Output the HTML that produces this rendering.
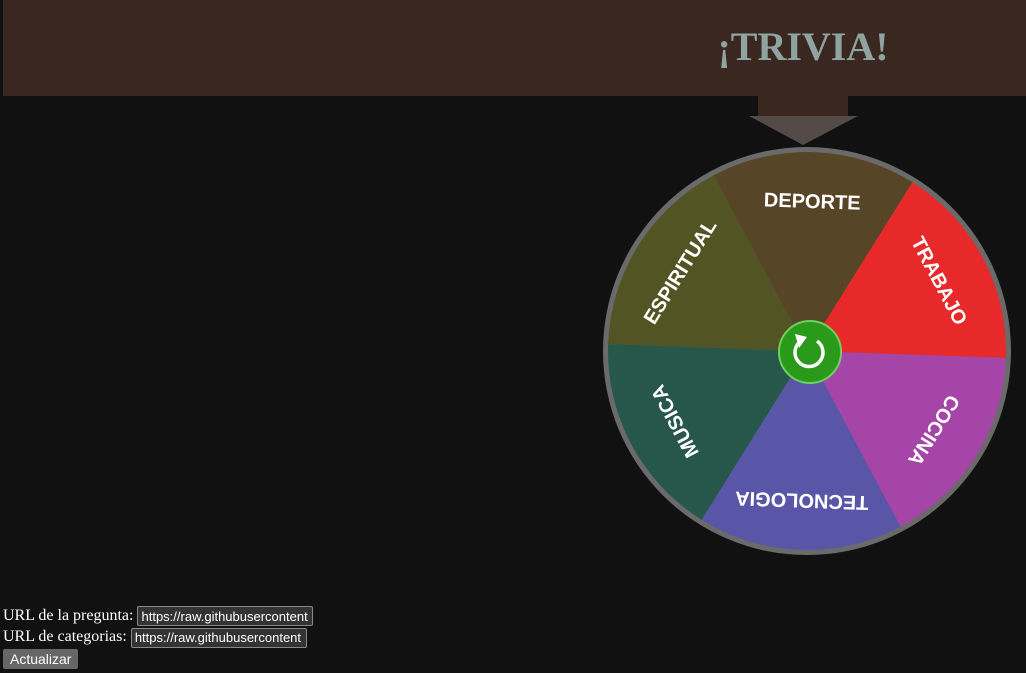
<!DOCTYPE html>
<html><head><style>
html,body{margin:0;padding:0;background:#111;width:1026px;height:673px;overflow:hidden}
.hdr{position:absolute;left:3px;top:0;width:1023px;height:96px;background:#3a271f}
.title{position:absolute;left:703px;top:23px;width:200px;text-align:center;font:bold 40px "Liberation Serif",serif;color:#8fa3a0}
.form{position:absolute;left:3px;top:605px;color:#fff;font:16px "Liberation Serif",serif;line-height:21px}
.form input{background:#333;color:#fff;border:1px solid #888;border-radius:2px;font:13px "Liberation Sans",sans-serif;padding:1px 3px;height:16px;width:168px;vertical-align:middle}
.btn{display:inline-block;background:#666;color:#fff;font:14px "Liberation Sans",sans-serif;padding:2px 7px;border-radius:2px;margin-top:1px}
</style></head><body>
<div class="hdr"></div>
<div class="title">¡TRIVIA!</div>
<svg width="1026" height="673" style="position:absolute;left:0;top:0">
<rect x="758" y="96" width="90" height="20" fill="#3a271f"/>
<polygon points="749,116 858,116 803,145" fill="#544a47"/>
<g transform="translate(807,351)">
<circle r="204" fill="#6a6a6a"/>
<defs><path id="s" d="M0 0 L-99.5 -172.3 A199 199 0 0 1 99.5 -172.3 Z"/></defs>
<g font-family="'Liberation Sans',sans-serif" font-weight="bold" font-size="20" fill="#fff" text-anchor="middle">
<g transform="rotate(2)"><use href="#s" fill="#564527"/><text y="-143">DEPORTE</text></g>
<g transform="rotate(62)"><use href="#s" fill="#e8292a"/><text y="-143">TRABAJO</text></g>
<g transform="rotate(122)"><use href="#s" fill="#a545a8"/><text y="-143">COCINA</text></g>
<g transform="rotate(182)"><use href="#s" fill="#5956a8"/><text y="-143">TECNOLOGIA</text></g>
<g transform="rotate(242)"><use href="#s" fill="#27574a"/><text y="-143">MUSICA</text></g>
<g transform="rotate(302)"><use href="#s" fill="#535423"/><text y="-143">ESPIRITUAL</text></g>
</g>
<circle cx="3" cy="1" r="31" fill="#2a9a1a" stroke="#6fcf5f" stroke-width="2"/>
<path d="M-6 -10 A14 14 0 1 0 10 -10" fill="none" stroke="#fff" stroke-width="3.5"/>
<polygon points="-12,-17 0,-14 -8,-3" fill="#fff"/>
</g>
</svg>
<div class="form">URL de la pregunta: <input value="https://raw.githubusercontent"><br>URL de categorias: <input value="https://raw.githubusercontent"><br><span class="btn">Actualizar</span></div>
</body></html>
